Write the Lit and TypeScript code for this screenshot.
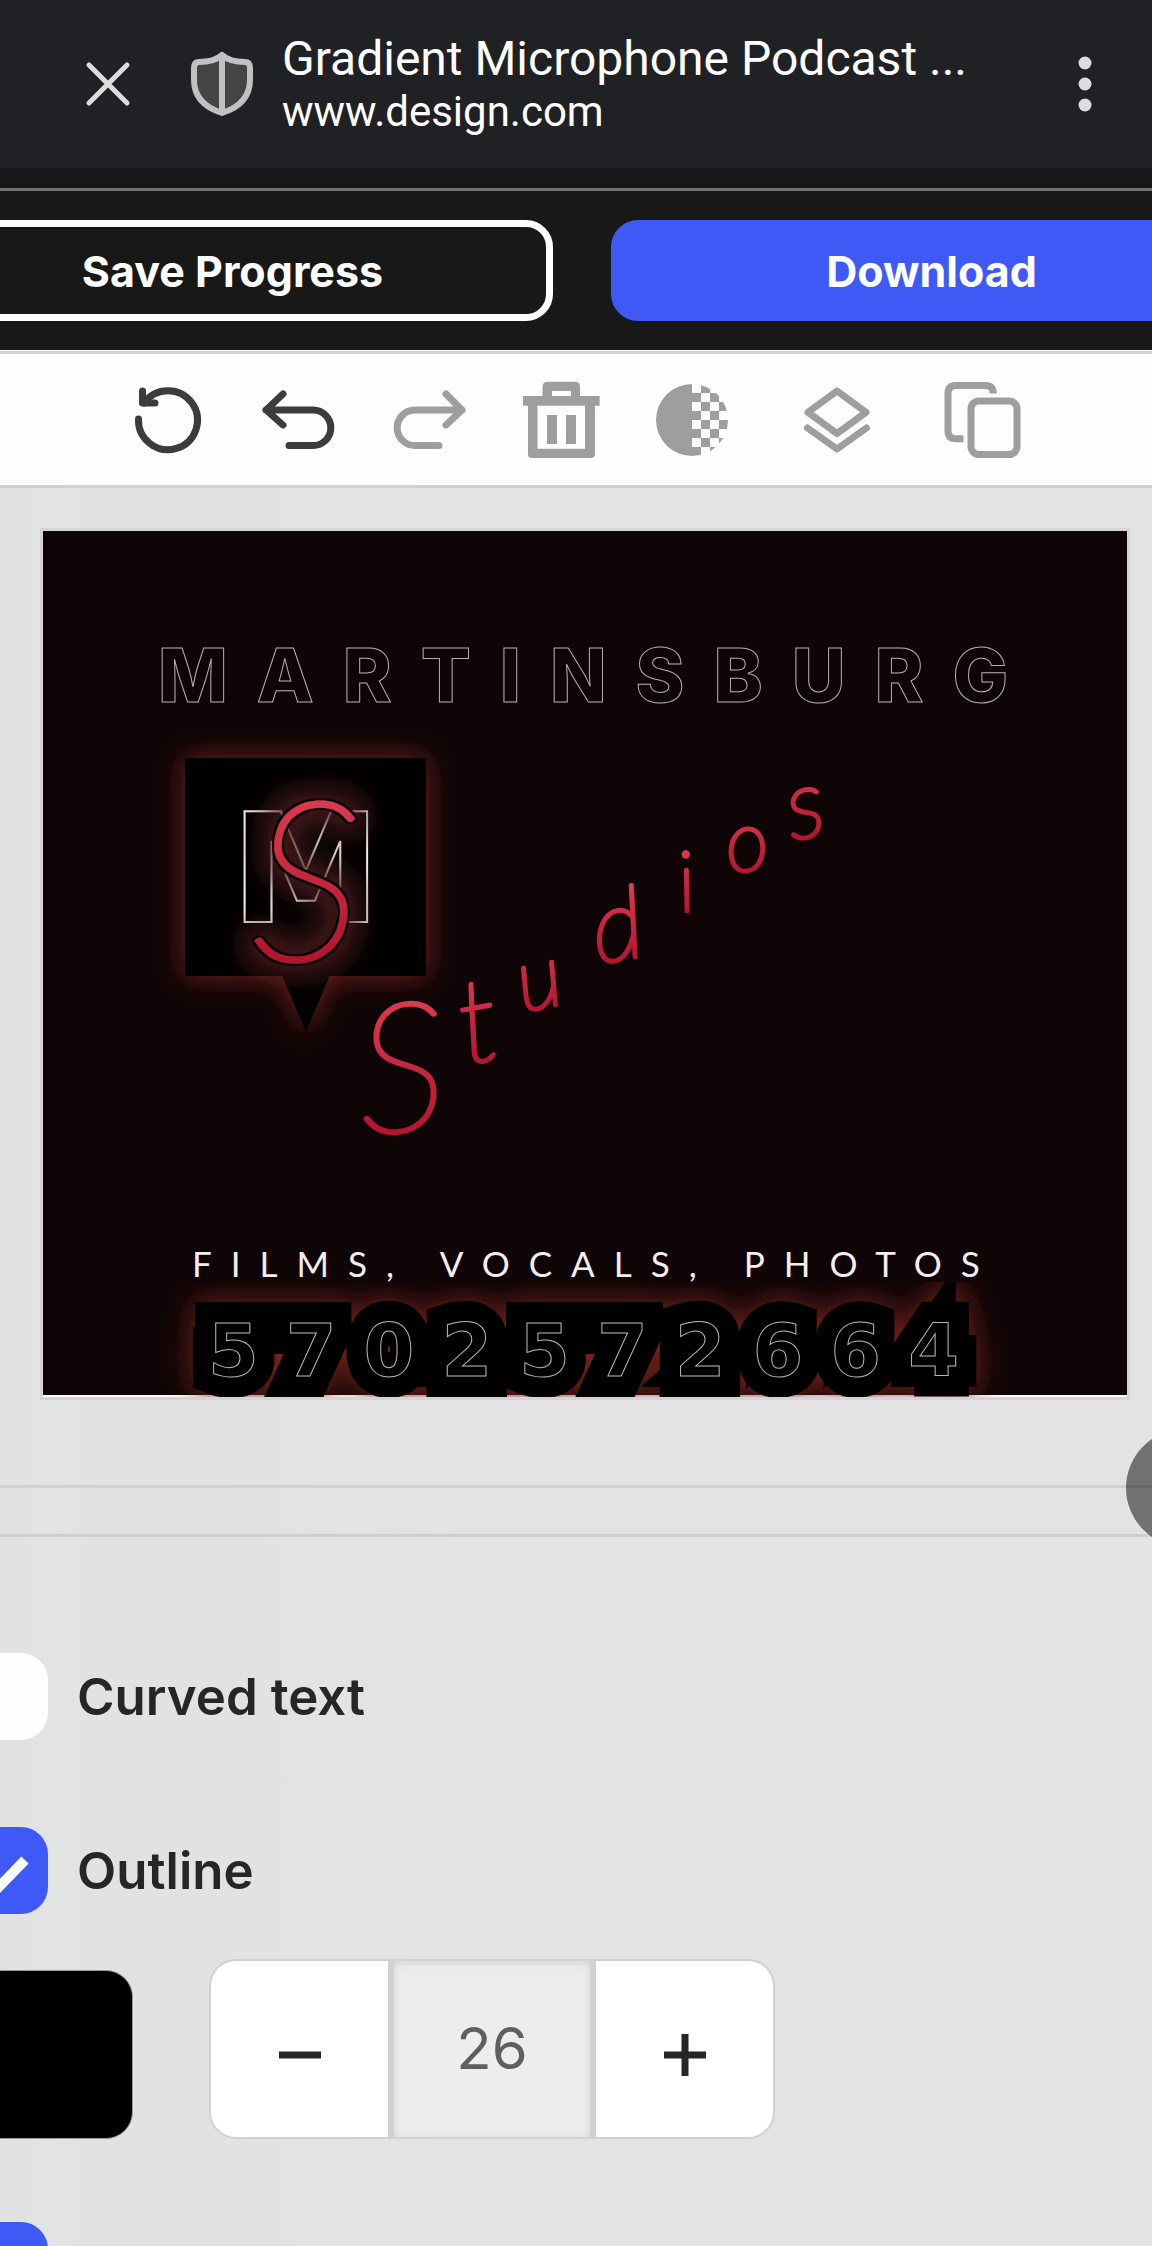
import { LitElement, html, css, svg } from "lit";
import { customElement, state } from "lit/decorators.js";

const CELL = 9;

@customElement("browser-bar")
class BrowserBar extends LitElement {
  static styles = css`
    :host {
      display: flex;
      align-items: center;
      box-sizing: border-box;
      height: 168px;
      flex: none;
      padding: 0 44px 0 84px;
      background: #202124;
      color: #fff;
      font-family: Roboto, sans-serif;
    }
    button {
      flex: none;
      padding: 0;
      border: 0;
      background: none;
    }
    svg {
      display: block;
    }
    .shield {
      margin-left: 54px;
    }
    .titles {
      flex: 1;
      min-width: 0;
      margin-left: 26px;
    }
    .title,
    .host {
      margin: 0;
      font-weight: 400;
      white-space: nowrap;
      overflow: hidden;
    }
    .title {
      font-size: 48px;
      line-height: 56px;
    }
    .host {
      font-size: 42px;
      line-height: 50px;
    }
  `;

  render() {
    return html`
      <button aria-label="Close tab">
        <svg width="48" height="48" viewBox="0 0 48 48" fill="none" stroke="#dcdddf" stroke-width="5" stroke-linecap="round">
          <path d="M5 5 43 43M43 5 5 43" />
        </svg>
      </button>
      <button class="shield" aria-label="Site protection">
        <svg width="70" height="66" viewBox="0 0 70 66">
          <path
            d="M36 4C42 9.500 50 11 59 11Q64 11 64 17V29Q64 53 36 62Q8 53 8 29V17Q8 11 13 11C22 11 30 9.500 36 4Z"
            fill="#424542" stroke="#c0c1c2" stroke-width="6" stroke-linejoin="round" />
          <path d="M36 6V60" stroke="#c0c1c2" stroke-width="6" />
        </svg>
      </button>
      <div class="titles">
        <h1 class="title">Gradient Microphone Podcast ...</h1>
        <p class="host">www.design.com</p>
      </div>
      <button aria-label="Menu">
        <svg width="44" height="60" viewBox="0 0 44 60" fill="#dcdddf">
          <circle cx="21" cy="9" r="6.500" />
          <circle cx="21" cy="30" r="6.500" />
          <circle cx="21" cy="51" r="6.500" />
        </svg>
      </button>
    `;
  }
}

@customElement("action-bar")
class ActionBar extends LitElement {
  static styles = css`
    :host {
      display: block;
      flex: none;
      overflow: hidden;
      padding: 20px 0 29px;
      background: #171817;
      border-bottom: 1px solid #fff;
    }
    .rule {
      height: 3px;
      background: #747574;
    }
    .row {
      display: grid;
      grid-template-columns: 1fr 1fr;
      gap: 58px;
      margin: 29px -100px 0 -88px;
    }
    button {
      height: 101px;
      box-sizing: border-box;
      border-radius: 27px;
      font: 700 43px/54px Inter, sans-serif;
      color: #fff;
    }
    .save {
      border: 7px solid #fff;
      background: none;
    }
    .download {
      border: 0;
      background: #3f59f7;
    }
  `;

  render() {
    return html`
      <div class="rule"></div>
      <div class="row">
        <button class="save">Save Progress</button>
        <button class="download">Download</button>
      </div>
    `;
  }
}

@customElement("tool-bar")
class ToolBar extends LitElement {
  static styles = css`
    :host {
      display: flex;
      flex: none;
      align-items: center;
      box-sizing: border-box;
      height: 137px;
      padding: 0 128px;
      gap: 51px;
      background: #fdfffe;
      border-top: 3px solid #d2d3d2;
      border-bottom: 3px solid #cdd0ce;
    }
    button {
      flex: none;
      padding: 0;
      border: 0;
      background: none;
      color: #9d9f9d;
    }
    button.active {
      color: #3b3c3b;
    }
    button.wide {
      margin-left: 14px;
    }
    svg {
      display: block;
      fill: none;
      stroke: currentColor;
      stroke-width: 7;
      stroke-linecap: round;
      stroke-linejoin: round;
    }
    .solid {
      fill: currentColor;
      stroke: none;
    }
    .butt {
      stroke-linecap: butt;
    }
  `;

  private checks() {
    const cells = [];
    for (let row = 0; row < 8; row++) {
      for (let col = 0; col < 4; col++) {
        if ((row + col) % 2 === 1) {
          cells.push(svg`<rect x=${40 + col * CELL} y=${4 + row * CELL} width=${CELL} height=${CELL} />`);
        }
      }
    }
    return cells;
  }

  render() {
    return html`
      <button class="active" aria-label="Reset">
        <svg width="80" height="80" viewBox="129 380 80 80">
          <path d="M139.500 419A29.500 29.500 0 1 0 145 403" />
          <path d="M143.500 391V403H156" />
        </svg>
      </button>
      <button class="active" aria-label="Undo">
        <svg width="80" height="80" viewBox="260 380 80 80">
          <path d="M284 394 267 410 284 425M267 410H314A17.800 17.800 0 0 1 314 445.600H290" />
        </svg>
      </button>
      <button aria-label="Redo">
        <svg width="80" height="80" viewBox="391 380 80 80">
          <path d="M447 394 463 410 447 425M463 410H416A17.800 17.800 0 0 0 416 445.600H440" />
        </svg>
      </button>
      <button aria-label="Delete">
        <svg class="solid" width="80" height="80" viewBox="521 380 80 80">
          <path
            fill-rule="evenodd"
            d="M523 396H542.500V387Q542.500 381.700 548 381.700H575Q580 381.700 580 387V396H599.600V405.700H595V454Q595 458 591 458H532Q528 458 528 454V405.700H523ZM552 391V396H571V391ZM537.500 405.700V448.700H585V405.700ZM547 415H557V444H547ZM566 415H576V444H566Z" />
        </svg>
      </button>
      <button aria-label="Transparency">
        <svg class="solid" width="80" height="80" viewBox="0 0 80 80">
          <clipPath id="disc"><circle cx="40" cy="40" r="36" /></clipPath>
          <g clip-path="url(#disc)">
            <rect x="4" y="4" width="36" height="72" />
            ${this.checks()}
          </g>
        </svg>
      </button>
      <button class="wide" aria-label="Layers">
        <svg width="80" height="80" viewBox="798 380 80 80">
          <path d="M838 391 867 412.300 838 433.500 809 412.300ZM808.500 428 838 449 867.500 428" />
        </svg>
      </button>
      <button class="wide" aria-label="Duplicate">
        <svg class="butt" width="80" height="80" viewBox="943 380 80 80">
          <path d="M994.300 393.500Q994.300 385.500 986.300 385.500H957Q949 385.500 949 393.500V430.800Q949 438.800 957 438.800H964.500" />
          <rect x="972" y="401" width="46" height="53.500" rx="8" />
        </svg>
      </button>
    `;
  }
}

@customElement("design-canvas")
class DesignCanvas extends LitElement {
  static styles = css`
    :host {
      display: block;
      flex: none;
      padding: 43px 25px 88px 43px;
    }
    svg {
      display: block;
      width: 100%;
      height: auto;
      background: #fff;
      box-shadow: 0 0 0 3px #d5d3d5;
    }
    .name {
      font: 800 74px Inter, sans-serif;
      letter-spacing: 29px;
      fill: none;
      stroke: #b5adaf;
      stroke-width: 1px;
    }
    .phone,
    .mono {
      font-family: "DejaVu Sans", sans-serif;
      font-weight: 700;
    }
    .phone {
      font-size: 73px;
      letter-spacing: 27px;
    }
    .thick {
      fill: #000;
      stroke: #000;
      stroke-width: 42px;
      stroke-miterlimit: 4;
    }
    .thin {
      fill: #000;
      stroke: #b8b6b8;
    }
    .mono {
      font-size: 151px;
      fill: none;
      stroke: #f4eeee;
      stroke-width: 2px;
    }
    .services {
      font: 400 35px Lato, sans-serif;
      letter-spacing: 19px;
      fill: #f6eeee;
    }
    .script {
      font-family: Lato, sans-serif;
      font-style: italic;
      font-weight: 100;
    }
    .word {
      stroke: url(#red);
      stroke-width: 4px;
      stroke-linecap: round;
      stroke-linejoin: round;
    }
    .initial {
      font-size: 222px;
      stroke: url(#red);
      stroke-width: 5px;
    }
  `;

  render() {
    return html`
      <svg viewBox="43 531 1084 866" role="img" aria-label="Martinsburg Studios logo design">
        <defs>
          <linearGradient id="red" x1="0" y1="0" x2="0" y2="1">
            <stop offset="0" stop-color="#e84a5e" />
            <stop offset="0.500" stop-color="#c8283f" />
            <stop offset="1" stop-color="#a60c26" />
          </linearGradient>
          <filter id="glow" x="-30%" y="-30%" width="160%" height="160%">
            <feDropShadow dx="0" dy="0" stdDeviation="14" flood-color="#74201f" />
          </filter>
          <filter id="halo" x="-60%" y="-40%" width="220%" height="180%">
            <feMorphology in="SourceAlpha" operator="dilate" radius="12" />
            <feGaussianBlur stdDeviation="14" />
            <feComponentTransfer result="soft"><feFuncA type="linear" slope="0.900" /></feComponentTransfer>
            <feFlood flood-color="#4a1a1c" />
            <feComposite in2="soft" operator="in" result="aura" />
            <feMorphology in="SourceAlpha" operator="dilate" radius="2" result="edge" />
            <feMerge>
              <feMergeNode in="aura" />
              <feMergeNode in="edge" />
              <feMergeNode in="SourceGraphic" />
            </feMerge>
          </filter>
        </defs>
        <rect x="43" y="531" width="1084" height="864" fill="#100506" />
        <text class="name" x="158" y="702">MARTINSBURG</text>
        <path filter="url(#glow)" d="M185 758H426V976H330L306 1032 282 976H185Z" />
        <text class="mono" x="306" y="922" text-anchor="middle">M</text>
        <text class="script initial" filter="url(#halo)" x="252" y="960" fill="url(#red)">S</text>
        <g class="script word" fill="url(#red)">
          <text font-size="180" x="362" y="1134" rotate="-4">S</text>
          <text font-size="116" x="466" y="1064" rotate="-10">t</text>
          <text font-size="88" x="523" y="1012" rotate="-12">u</text>
          <text font-size="100" x="598" y="964" rotate="-10">d</text>
          <text font-size="84" x="682" y="912" rotate="-8">i</text>
          <text font-size="84" x="730" y="874" rotate="-10">o</text>
          <text font-size="96" x="792" y="840" rotate="-10">s</text>
        </g>
        <text class="services" x="192" y="1277">FILMS, VOCALS, PHOTOS</text>
        <g class="phone">
          <text class="thick" filter="url(#glow)" x="208" y="1376" aria-hidden="true">5702572664</text>
          <text class="thin" x="208" y="1376">5702572664</text>
        </g>
      </svg>
    `;
  }
}

@customElement("text-panel")
class TextPanel extends LitElement {
  @state() private size = 26;

  static styles = css`
    :host {
      display: block;
      flex: 1;
      border-top: 3px solid #d2d1d2;
      font-family: Inter, sans-serif;
      color: #262626;
    }
    .handle {
      position: relative;
      height: 46px;
      border-bottom: 3px solid #d0cfd0;
    }
    .bubble {
      position: absolute;
      top: -59px;
      right: -92px;
      width: 118px;
      height: 118px;
      padding: 0;
      border: 0;
      border-radius: 50%;
      background: rgba(0, 0, 0, 0.5);
    }
    .options {
      padding-top: 116px;
    }
    .option {
      display: flex;
      align-items: center;
      gap: 29px;
      margin-left: -39px;
      font-size: 51px;
      font-weight: 600;
      line-height: 60px;
    }
    .box {
      display: grid;
      flex: none;
    }
    .box > * {
      grid-area: 1 / 1;
      width: 87px;
      height: 87px;
      margin: 0;
    }
    input[type="checkbox"] {
      appearance: none;
      border-radius: 27px;
      background: #fdfffd;
    }
    input[type="checkbox"]:checked {
      background: #3f59f7;
    }
    .tick {
      pointer-events: none;
      fill: none;
      stroke: #fff;
      stroke-width: 10;
    }
    .gap {
      margin-top: 87px;
    }
    .settings {
      display: flex;
      align-items: flex-end;
      gap: 76px;
      margin-top: 45px;
    }
    .swatch {
      width: 133px;
      height: 169px;
      padding: 0;
      border: 1px solid #9a9a9a;
      border-left: 0;
      border-radius: 0 27px 27px 0;
      background: #000;
    }
    .stepper {
      display: flex;
      width: 566px;
      height: 180px;
      box-sizing: border-box;
      border: 2px solid #d1d0d2;
      border-radius: 27px;
      overflow: hidden;
    }
    .step {
      display: grid;
      place-items: center;
      flex: 1;
      padding: 12px 0 0;
      border: 0;
      background: #fff;
    }
    .value {
      width: 208px;
      box-sizing: border-box;
      padding: 0 0 2px;
      border: 0 solid #d1d0d2;
      border-width: 0 6px;
      background: #eeecee;
      box-shadow: inset 0 2px 9px rgba(0, 0, 0, 0.12);
      font: 400 58px/60px Inter, sans-serif;
      text-align: center;
      color: #5f5e60;
    }
    .last {
      margin-top: 83px;
    }
  `;

  private tick() {
    return html`<svg class="tick" viewBox="0 0 87 87" aria-hidden="true"><path d="M22 47 36 62 64 33" /></svg>`;
  }

  render() {
    return html`
      <div class="handle"><button class="bubble" aria-label="Help"></button></div>
      <div class="options">
        <label class="option">
          <span class="box"><input type="checkbox" /></span>Curved text
        </label>
        <label class="option gap">
          <span class="box"><input type="checkbox" checked />${this.tick()}</span>Outline
        </label>
        <div class="settings">
          <button class="swatch" aria-label="Outline colour"></button>
          <div class="stepper">
            <button class="step" aria-label="Decrease" @click=${() => this.size--}>
              <svg width="44" height="44" viewBox="0 0 44 44"><path d="M1 22H43" stroke="#262626" stroke-width="7" /></svg>
            </button>
            <input class="value" aria-label="Outline size" .value=${String(this.size)} />
            <button class="step" aria-label="Increase" @click=${() => this.size++}>
              <svg width="44" height="44" viewBox="0 0 44 44"><path d="M1 22H43M22 1V43" stroke="#262626" stroke-width="7" /></svg>
            </button>
          </div>
        </div>
        <div class="option last">
          <span class="box"><input type="checkbox" checked aria-label="Shadow" />${this.tick()}</span>
        </div>
      </div>
    `;
  }
}

@customElement("app-root")
class AppRoot extends LitElement {
  static styles = css`
    :host {
      display: flex;
      flex-direction: column;
      height: 100vh;
      overflow: hidden;
      background: linear-gradient(90deg, #e1e3e2, #e3e2e3 12%, #e4e2e4 40%);
    }
  `;

  render() {
    return html`
      <browser-bar></browser-bar>
      <action-bar></action-bar>
      <tool-bar></tool-bar>
      <design-canvas></design-canvas>
      <text-panel></text-panel>
    `;
  }
}
